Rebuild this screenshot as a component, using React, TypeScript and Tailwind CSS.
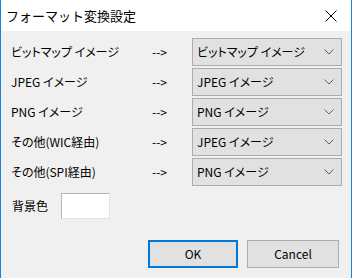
import React from "react";

const rows: [string, string][] = [
  ["ビットマップ イメージ", "ビットマップ イメージ"],
  ["JPEG イメージ", "JPEG イメージ"],
  ["PNG イメージ", "PNG イメージ"],
  ["その他(WIC経由)", "JPEG イメージ"],
  ["その他(SPI経由)", "PNG イメージ"],
];

function Chevron() {
  return (
    <svg width="10" height="6" viewBox="0 0 10 6" className="shrink-0">
      <path d="M0.5 0.5 L5 5 L9.5 0.5" fill="none" stroke="#606060" strokeWidth="1" />
    </svg>
  );
}

export default function App() {
  return (
    <div
      className="w-[352px] h-[278px] flex flex-col border-x border-[#1883d7] bg-[#f0f0f0] text-[12px] text-black leading-none [font-family:'Noto_Sans_CJK_JP','Noto_Sans',sans-serif] [font-feature-settings:'palt']"
    >
      <div className="h-[31px] shrink-0 bg-white flex items-center justify-between pl-[5px] pr-[14px]">
        <span className="text-[13px] [font-feature-settings:normal]">フォーマット変換設定</span>
        <svg width="12" height="12" viewBox="0 0 12 12">
          <path d="M0.5 0.5 L11.5 11.5 M11.5 0.5 L0.5 11.5" stroke="#000" strokeWidth="1" />
        </svg>
      </div>
      <div className="flex-1 flex flex-col pt-[7px] pl-[9px] pr-[9px]">
        <div className="flex flex-col gap-[2px]">
          {rows.map(([label, value], i) => (
            <div key={i} className="flex items-center h-[28px]">
              <span className="w-[142px] pl-[1px]">{label}</span>
              <span className="w-[40px]">--&gt;</span>
              <div className="w-[150px] h-[28px] border border-[#adadad] bg-[#e1e1e1] flex items-center justify-between pl-[4px] pr-[7px]">
                <span>{value}</span>
                <Chevron />
              </div>
            </div>
          ))}
        </div>
        <div className="flex items-center mt-[7px] h-[26px]">
          <span className="pl-[2px] w-[51px]">背景色</span>
          <div className="w-[49px] h-[26px] bg-white border border-[#b4b4b4] border-r-[#e3e3e3] border-b-[#e3e3e3]" />
        </div>
        <div className="flex justify-end gap-[9px] mt-[21px] pr-[3px]">
          <div className="w-[90px] h-[28px] border-2 border-[#0078d7] bg-[#e1e1e1] flex items-center justify-center">
            OK
          </div>
          <div className="w-[92px] h-[28px] border border-[#adadad] bg-[#e1e1e1] flex items-center justify-center">
            Cancel
          </div>
        </div>
      </div>
    </div>
  );
}
